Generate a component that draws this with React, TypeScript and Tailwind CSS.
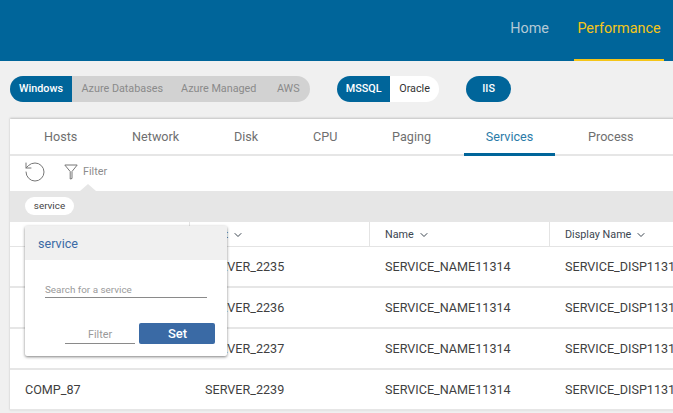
import { ChevronDown, RotateCcw } from "lucide-react"

const tabs = ["Hosts", "Network", "Disk", "CPU", "Paging", "Services", "Process"]

const rows = [
  ["COMP_84", "SERVER_2235"],
  ["COMP_85", "SERVER_2236"],
  ["COMP_86", "SERVER_2237"],
  ["COMP_87", "SERVER_2239"],
]

const columns = ["Computer", "Host", "Name", "Display Name"]

export default function App() {
  return (
    <div className="relative h-[413px] w-[673px] overflow-hidden bg-[#f0f0f0] font-['Roboto',sans-serif]">
      <header className="flex h-[61px] justify-end bg-[#00659a] pr-[9px]">
        <nav className="flex items-stretch gap-[25px] text-[14.4px]">
          <a className="flex items-start pt-[18px] text-[#b4c9d6]">Home</a>
          <a className="flex w-[90px] items-start justify-center border-b-2 border-[#f5c518] pt-[18px] text-[#f5c518]">Performance</a>
        </nav>
      </header>

      <div className="flex h-[58px] items-start pl-[10px] pt-[15px] text-[10.8px]">
        <div className="flex h-[26px] items-center overflow-hidden rounded-full bg-[#d2d2d2] text-[#8a8a8a]">
          <span className="flex h-full w-[62px] items-center justify-center bg-[#00659a] font-medium text-white">Windows</span>
          <span className="ml-[9.5px]">Azure Databases</span>
          <span className="ml-[18px]">Azure Managed</span>
          <span className="ml-[20.5px] mr-[10.5px]">AWS</span>
        </div>
        <div className="ml-[27px] flex h-[26px] items-center overflow-hidden rounded-full bg-white">
          <span className="flex h-full w-[53px] items-center justify-center bg-[#00659a] font-medium text-white">MSSQL</span>
          <span className="flex w-[49px] justify-center text-[#333]">Oracle</span>
        </div>
        <div className="ml-[27px] flex h-[26px] w-[45px] items-center justify-center rounded-full bg-[#00659a] font-medium text-white">IIS</div>
      </div>

      <main className="ml-[10px] w-[720px] bg-white shadow-[0_-1px_2px_rgba(0,0,0,0.2)]">
        <div className="flex h-[37px] gap-[10.8px] border-b-2 border-[#e6e6e6] pl-[12px] text-[12.6px] text-[#6f6f6f]">
          {tabs.map((tab) => (
            <div
              key={tab}
              className={
                tab === "Services"
                  ? "-mb-[2px] flex h-[37px] items-center border-b-[3px] border-[#00659a] px-[22px] pt-[2px] text-[#2b7ba8]"
                  : "flex h-[35px] items-center px-[22px] pt-[2px]"
              }
            >
              {tab}
            </div>
          ))}
        </div>

        <div className="flex h-[35px] items-center pb-[3px] pl-[13px] text-[10.8px] text-[#8c8c8c]">
          <RotateCcw size={24} strokeWidth={1} className="text-[#777]" />
          <svg width="14" height="16" viewBox="0 0 14 16" fill="none" stroke="#777" className="ml-[17px]">
            <path d="M0.8 1 H13.2 L8 7.5 V14.5 L6.2 15 V7.5 Z" strokeWidth="1" strokeLinejoin="round" />
          </svg>
          <span className="ml-[5px]">Filter</span>
        </div>

        <div className="relative flex h-[31px] items-start bg-[#e6e6e6] pl-[15px] pt-[6px]">
          <span className="absolute -top-[7px] left-[70px] size-0 border-x-[8px] border-b-[7px] border-x-transparent border-b-[#e6e6e6]" />
          <span className="flex h-[18px] w-[49px] items-center justify-center rounded-full bg-white text-[9.9px] text-[#444]">service</span>
        </div>

        <div className="grid h-[25px] grid-cols-[180px_180px_180px_180px] border-b border-[#e4e4e4] text-[10.8px] text-[#3c4650]">
          {columns.map((col) => (
            <div key={col} className="flex items-center gap-[4px] border-r border-[#e4e4e4] pl-[15px] pt-[2px]">
              {col}
              <ChevronDown size={12} strokeWidth={2} />
            </div>
          ))}
        </div>

        {rows.map((row) => (
          <div key={row[1]} className="grid h-[41px] grid-cols-[180px_180px_180px_180px] items-center border-b-2 border-[#e6e6e6] pt-[2px] text-[12.6px] text-[#3f3f3f]">
            <span className="pl-[15px]">{row[0]}</span>
            <span className="pl-[15px]">{row[1]}</span>
            <span className="pl-[15px]">SERVICE_NAME11314</span>
            <span className="pl-[15px]">SERVICE_DISP11314</span>
          </div>
        ))}
      </main>

      <div className="absolute left-[25px] top-[226px] w-[202px] rounded-[2px] bg-white shadow-[0_1px_3px_rgba(0,0,0,0.5)]">
        <div className="flex h-[34px] items-center bg-[#f0f0f0] pl-[13px] pt-[2px] text-[12.6px] text-[#3a6aa5]">service</div>
        <div className="mx-[20px] mt-[23px] flex h-[15px] w-[162px] items-center border-b border-[#8a8a8a] pt-[1px] text-[9.9px] text-[#9a9a9a]">Search for a service</div>
        <div className="mt-[25px] flex items-end pb-[12px] pl-[40px]">
          <div className="flex h-[20px] w-[70px] items-center justify-center border-b border-[#8a8a8a] pt-[3px] text-[10.8px] text-[#9a9a9a]">Filter</div>
          <button className="ml-[4px] h-[21px] w-[76px] rounded-[2px] bg-[#3a6aa5] pl-[1px] text-[13px] font-medium text-white">Set</button>
        </div>
      </div>
    </div>
  )
}
